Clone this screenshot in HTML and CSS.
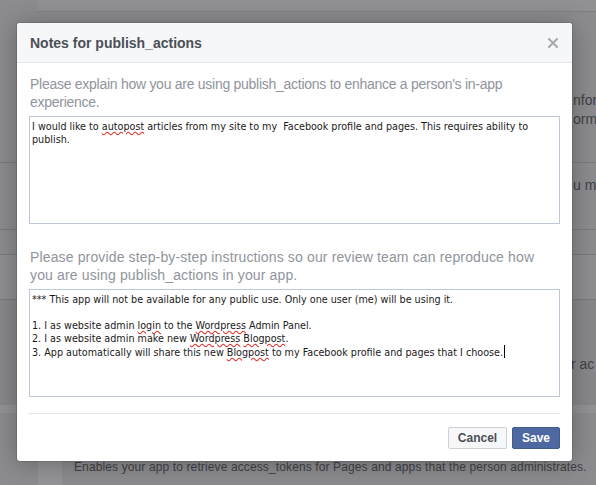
FILE: index.html
```html
<!DOCTYPE html>
<html>
<head>
<meta charset="utf-8">
<link rel="stylesheet" href="styles.css">
</head>
<body>
<div class="bg">
  <div class="bg-top"></div>
  <div class="bg-row row-a">
    <p class="peek">nfor</p>
    <p class="peek">orm</p>
  </div>
  <div class="bg-row row-b">
    <p class="peek">u m</p>
  </div>
  <div class="bg-row row-c"></div>
  <div class="bg-row row-d"></div>
  <div class="bg-row row-e">
    <p class="peek">r ac</p>
  </div>
  <div class="bg-band"></div>
  <div class="bg-foot">
    <div class="bg-strip"></div>
    <p class="bg-text">Enables your app to retrieve access_tokens for Pages and apps that the person administrates.</p>
  </div>
</div>

<div class="dialog">
  <div class="dlg-head">
    <h2 class="dlg-title">Notes for publish_actions</h2>
    <svg class="dlg-close" width="10" height="10" viewBox="0 0 10 10"><path d="M1 1L9 9M9 1L1 9" stroke="#a7aaae" stroke-width="2" stroke-linecap="square"/></svg>
  </div>
  <div class="dlg-body">
    <p class="q">Please explain how you are using publish_actions to enhance a person's in-app experience.</p>
    <div class="ta">I would like to <span class="sp">autopost</span> articles from my site to my&nbsp; Facebook profile and pages. This requires ability to publish.</div>
    <p class="q q2">Please provide step-by-step instructions so our review team can reproduce how you are using publish_actions in your app.</p>
    <div class="ta">*** This app will not be available for any public use. Only one user (me) will be using it.<br><br>1. I as website admin <span class="sp">login</span> to the <span class="sp">Wordpress</span> Admin Panel.<br>2. I as website admin make new <span class="sp">Wordpress</span> <span class="sp">Blogpost</span>.<br>3. App automatically will share this new <span class="sp">Blogpost</span> to my Facebook profile and pages that I choose.<span class="caret"></span></div>
  </div>
  <div class="dlg-foot">
    <button class="btn btn-cancel">Cancel</button>
    <button class="btn btn-save">Save</button>
  </div>
</div>
</body>
</html>
```
FILE: styles.css
```css
html, body {
  margin: 0;
  padding: 0;
}
body {
  width: 596px;
  height: 485px;
  overflow: hidden;
  position: relative;
  background: #8c8c90;
  font-family: "Liberation Sans", Arial, sans-serif;
}
.bg {
  display: flex;
  flex-direction: column;
}
.bg-top {
  height: 11px;
  margin-left: 37px;
  background: #919195;
  border-bottom: 1px solid #7f7f83;
}
.bg-row {
  border-bottom: 1px solid #7b7b7f;
  padding-left: 573px;
  white-space: nowrap;
  box-sizing: border-box;
}
.peek {
  margin: 0;
  font-size: 14px;
  line-height: 19px;
  color: #3f4044;
}
.row-a { height: 151px; padding-top: 79px; }
.row-b { height: 67px; padding-top: 13px; }
.row-c { height: 25px; }
.row-d { height: 45px; background: #8f8f93; }
.row-e { height: 105px; padding-top: 55px; background: #88888c; border-bottom: none; padding-left: 571px; }
.bg-band { height: 8px; background: #939397; }
.bg-foot {
  display: flex;
  height: 80px;
}
.bg-strip {
  width: 24px;
  margin-left: 38px;
  background: #959598;
}
.bg-text {
  margin: 0;
  padding-left: 12px;
  padding-top: 47px;
  font-size: 12px;
  letter-spacing: 0.12px;
  line-height: 14px;
  color: #404145;
  white-space: nowrap;
}

.dialog {
  position: absolute;
  left: 17px;
  top: 23px;
  width: 555px;
  background: #fff;
  border-radius: 3px;
  box-shadow: 0 2px 26px rgba(0,0,0,.3), 0 0 0 1px rgba(0,0,0,.1);
  overflow: hidden;
}
.dlg-head {
  height: 39px;
  background: #f6f7f9;
  border-bottom: 1px solid #e5e5e5;
  display: flex;
  align-items: center;
  justify-content: space-between;
  padding: 0 14px 0 13px;
}
.dlg-title {
  margin: 0;
  font-size: 14px;
  font-weight: bold;
  color: #4b4f56;
}
.dlg-close {
  display: block;
}
.dlg-body {
  padding: 12px 12px 16px 12px;
}
.q {
  margin: 0 0 5px 1px;
  font-size: 14px;
  letter-spacing: -0.27px;
  line-height: 18px;
  color: #90949c;
}
.q2 {
  margin-top: 24px;
  padding-right: 10px;
  letter-spacing: 0.14px;
}
.ta {
  height: 108px;
  box-sizing: border-box;
  border: 1px solid #bdc7d8;
  padding: 3px 16px 3px 2px;
  font-family: "DejaVu Sans Condensed", "Liberation Sans", sans-serif;
  font-size: 10.7px;
  line-height: 13px;
  color: #1a1a1a;
}
.sp {
  text-decoration-line: underline;
  text-decoration-style: wavy;
  text-decoration-color: #e0302a;
}
.caret {
  display: inline-block;
  width: 1px;
  height: 13px;
  background: #000;
  vertical-align: -2px;
  margin-left: 1px;
}
.dlg-foot {
  margin: 0 12px;
  border-top: 1px solid #e5e5e5;
  padding: 13px 0 12px;
  display: flex;
  justify-content: flex-end;
  gap: 5px;
}
.btn {
  height: 22px;
  box-sizing: border-box;
  border-radius: 2px;
  font-family: "Liberation Sans", Arial, sans-serif;
  font-size: 12px;
  font-weight: bold;
  padding: 0 8px;
  line-height: 20px;
}
.btn-cancel {
  width: 59px;
  background: #f6f7f9;
  border: 1px solid #ced0d4;
  color: #4b4f56;
}
.btn-save {
  width: 48px;
  background: #4e69a2;
  border: 1px solid #435a8b;
  color: #fff;
}
```
